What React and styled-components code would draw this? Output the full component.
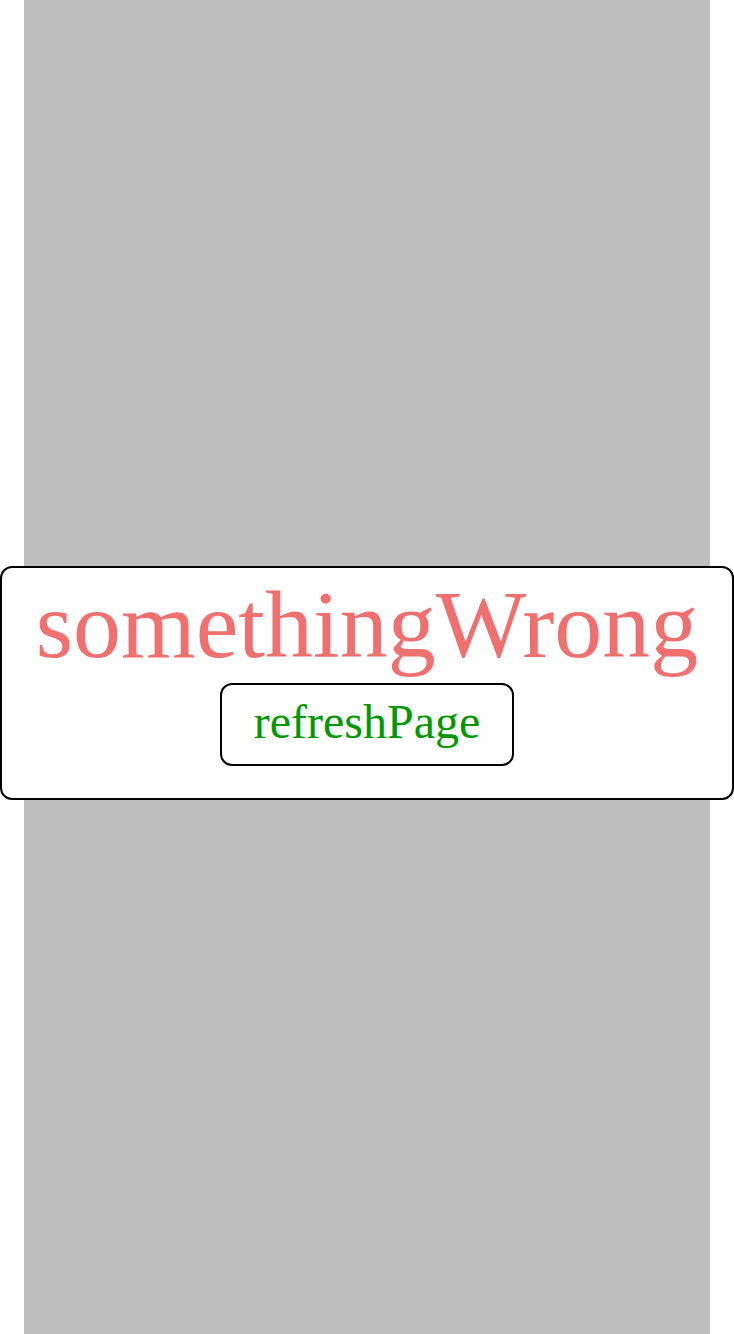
import styled, { createGlobalStyle } from "styled-components";

const GlobalStyle = createGlobalStyle`
  html, body {
    margin: 0;
    padding: 0;
    background: #ffffff;
  }
`;

const StyledPage = styled.div`
  margin: 0 24px;
  height: 100vh;
  background: #bebebe;
`;

const StyledErrorCard = styled.div`
  position: fixed;
  left: 0;
  right: 0;
  top: 566px;
  height: 234px;
  box-sizing: border-box;
  border: 2px solid #000000;
  border-radius: 12px;
  background: #ffffff;
  display: flex;
  flex-direction: column;
  align-items: center;
  padding-top: 4px;
  font-family: "Liberation Serif", "Times New Roman", serif;
`;

const StyledMessage = styled.p`
  margin: 0;
  font-size: 96px;
  line-height: 106px;
  color: #f07070;
`;

const StyledRefreshButton = styled.button`
  margin-top: 5px;
  box-sizing: border-box;
  width: 294px;
  height: 83px;
  padding: 0 0 7px;
  border: 2px solid #000000;
  border-radius: 12px;
  background: #ffffff;
  font-family: inherit;
  font-size: 48px;
  line-height: 53px;
  color: #009900;
  cursor: pointer;
`;

export default function App() {
  return (
    <>
      <GlobalStyle />
      <StyledPage />
      <StyledErrorCard>
        <StyledMessage>somethingWrong</StyledMessage>
        <StyledRefreshButton onClick={() => window.location.reload()}>
          refreshPage
        </StyledRefreshButton>
      </StyledErrorCard>
    </>
  );
}
